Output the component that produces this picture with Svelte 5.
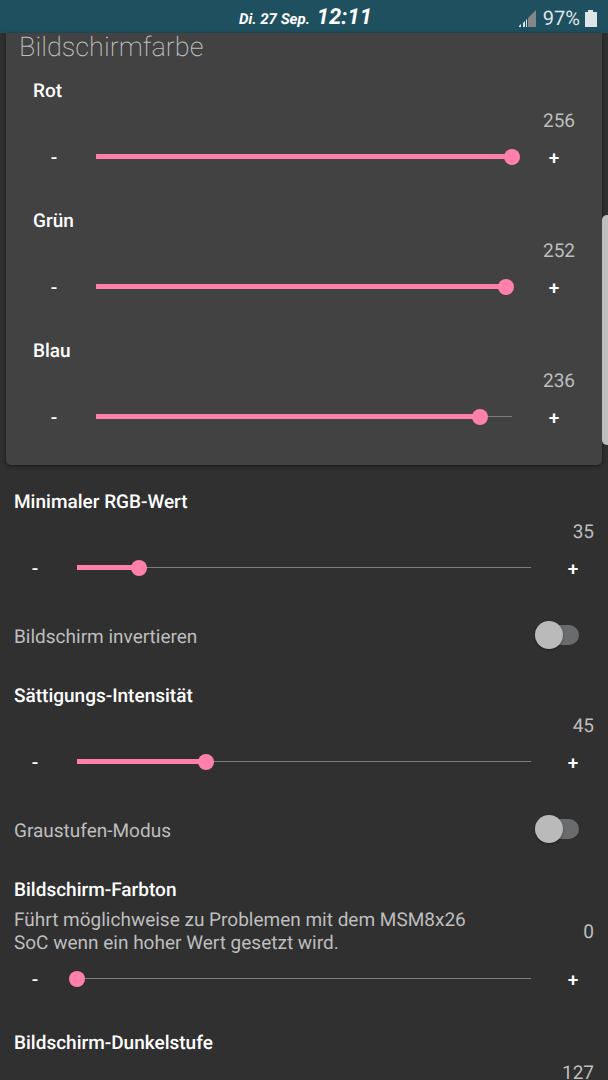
<script lang="ts">
	interface SliderSetting {
		id: string;
		label: string;
		value: number;
		max: number;
		summary?: string;
	}

	interface SwitchSetting {
		id: string;
		label: string;
		checked: boolean;
	}

	let colors: SliderSetting[] = $state([
		{ id: 'red', label: 'Rot', value: 256, max: 256 },
		{ id: 'green', label: 'Grün', value: 252, max: 256 },
		{ id: 'blue', label: 'Blau', value: 236, max: 256 }
	]);

	let minRgb: SliderSetting = $state({ id: 'min-rgb', label: 'Minimaler RGB-Wert', value: 35, max: 255 });
	let invert: SwitchSetting = $state({ id: 'invert', label: 'Bildschirm invertieren', checked: false });
	let saturation: SliderSetting = $state({
		id: 'saturation',
		label: 'Sättigungs-Intensität',
		value: 45,
		max: 158
	});
	let grayscale: SwitchSetting = $state({ id: 'grayscale', label: 'Graustufen-Modus', checked: false });
	let hue: SliderSetting = $state({
		id: 'hue',
		label: 'Bildschirm-Farbton',
		value: 0,
		max: 1536,
		summary: 'Führt möglichweise zu Problemen mit dem MSM8x26 SoC wenn ein hoher Wert gesetzt wird.'
	});
	let darkness: SliderSetting = $state({
		id: 'darkness',
		label: 'Bildschirm-Dunkelstufe',
		value: 127,
		max: 255
	});

	// Move a slider by one step and keep it in range
	const step = (item: SliderSetting, delta: number) => {
		item.value = Math.min(item.max, Math.max(0, item.value + delta));
	};
</script>

{#snippet slider(item: SliderSetting)}
	<section class="item">
		<label class="label" for={item.id}>{item.label}</label>
		<div class="info">
			<p class="summary">{item.summary ?? ''}</p>
			<output class="value" for={item.id}>{item.value}</output>
		</div>
		<div class="controls">
			<button type="button" class="step" onclick={() => step(item, -1)}>-</button>
			<input
				id={item.id}
				class="range"
				type="range"
				min="0"
				max={item.max}
				bind:value={item.value}
				style="--fill: {item.value / item.max}"
			/>
			<button type="button" class="step" onclick={() => step(item, 1)}>+</button>
		</div>
	</section>
{/snippet}

{#snippet toggle(item: SwitchSetting)}
	<div class="toggle">
		<label for={item.id}>{item.label}</label>
		<input id={item.id} class="switch" type="checkbox" role="switch" bind:checked={item.checked} />
	</div>
{/snippet}

<div class="screen">
	<header class="statusbar">
		<div class="clock">
			<span class="date">Di. 27 Sep.</span>
			<span class="time">12:11</span>
		</div>
		<div class="indicators">
			<svg class="signal" width="17" height="17" viewBox="0 0 17 17" aria-hidden="true">
				<path d="M0 17v-1l2-2v3zM4 17v-4l2-2v6zM7 17v-7l1-1v8z" fill="#dfe5e7" />
				<path d="M9 17V8l8-8v17z" fill="#858686" />
			</svg>
			<span class="percent">97%</span>
			<svg class="battery" width="12" height="17" viewBox="0 0 12 17" aria-hidden="true">
				<path d="M3 0h5v2h4v15H0V2h3z" fill="#dfe5e7" />
			</svg>
		</div>
	</header>

	<main class="content">
		<div class="card">
			<h1>Bildschirmfarbe</h1>
			{#each colors as color (color.id)}
				{@render slider(color)}
			{/each}
		</div>

		{@render slider(minRgb)}
		{@render toggle(invert)}
		{@render slider(saturation)}
		{@render toggle(grayscale)}
		{@render slider(hue)}
		{@render slider(darkness)}

		<div class="scroll-thumb"></div>
	</main>
</div>

<style>
	:global(body) {
		background: #303030;
	}

	.screen {
		display: flex;
		flex-direction: column;
		height: 100vh;
		overflow: hidden;
		background: #303030;
		color: #bebebe;
		font-family: Roboto, sans-serif;
		font-size: 19px;
		line-height: 23px;
		text-rendering: geometricPrecision;
	}

	/* Status bar */
	.statusbar {
		flex: none;
		display: grid;
		grid-template-columns: 1fr auto 1fr;
		align-items: center;
		height: 33px;
		padding: 3px 11px 0 14px;
		box-sizing: border-box;
		background: #1f505f;
		color: #dfe5e7;
	}

	.clock {
		grid-column: 2;
		display: flex;
		align-items: baseline;
		gap: 7px;
		color: #fff;
		font-style: italic;
		font-weight: 700;
	}

	.date {
		font-size: 15px;
	}

	.time {
		font-size: 22px;
	}

	.indicators {
		display: flex;
		align-items: center;
		justify-content: flex-end;
		gap: 5px;
	}

	.signal {
		margin-right: 2px;
	}

	.percent {
		font-size: 20px;
	}

	/* Scrolled settings list */
	.content {
		position: relative;
		flex: 1;
		min-height: 0;
	}

	.card {
		margin: 0 6px 8px;
		padding: 0 13px 13px;
		border-radius: 0 0 5px 5px;
		background: #424242;
		box-shadow: 0 1px 4px rgba(0, 0, 0, 0.5);
	}

	h1 {
		margin: 0 0 1px;
		font-size: 27px;
		font-weight: 200;
		line-height: 28px;
	}

	.item {
		padding: 17px 14px 18px;
	}

	.label {
		display: block;
		margin-bottom: 6px;
		color: #fff;
		font-weight: 500;
		line-height: 24px;
	}

	.info {
		display: flex;
		align-items: center;
		min-height: 23px;
		margin-bottom: 7px;
	}

	.summary {
		flex: 1;
		margin: 0;
	}

	.value {
		min-width: 96px;
		text-align: right;
	}

	.controls {
		display: flex;
		align-items: center;
		gap: 13px;
	}

	.step {
		flex: none;
		width: 42px;
		height: 35px;
		padding: 2px 0 0;
		border: 0;
		background: none;
		color: #fff;
		font: inherit;
		font-weight: 500;
		cursor: pointer;
	}

	.range {
		flex: 1;
		min-width: 0;
		height: 35px;
		margin: 0;
		appearance: none;
		background:
			linear-gradient(#ff80ab, #ff80ab) 8px center / calc((100% - 16px) * var(--fill)) 5px no-repeat,
			linear-gradient(#7c7c7c, #7c7c7c) center / calc(100% - 16px) 1px no-repeat;
		cursor: pointer;
	}

	.range::-webkit-slider-thumb {
		appearance: none;
		width: 16px;
		height: 16px;
		border-radius: 50%;
		background: #ff80ab;
	}

	.range::-moz-range-thumb {
		width: 16px;
		height: 16px;
		border: 0;
		border-radius: 50%;
		background: #ff80ab;
	}

	.toggle {
		display: flex;
		align-items: center;
		justify-content: space-between;
		height: 64px;
		padding: 0 29px 0 14px;
	}

	.toggle label {
		padding-top: 2px;
	}

	.switch {
		position: relative;
		width: 38px;
		height: 20px;
		margin: 0;
		appearance: none;
		border-radius: 10px;
		background: #6a6b6d;
		cursor: pointer;
	}

	.switch::before {
		content: '';
		position: absolute;
		top: -4px;
		left: -6px;
		width: 28px;
		height: 28px;
		border-radius: 50%;
		background: #bababa;
		box-shadow: 0 1px 2px rgba(0, 0, 0, 0.4);
	}

	.switch:checked::before {
		left: 16px;
		background: #ff80ab;
	}

	.scroll-thumb {
		position: absolute;
		top: 182px;
		right: 0;
		width: 6px;
		height: 230px;
		border-radius: 5px 0 0 5px;
		background: #bdbdbd;
	}
</style>
